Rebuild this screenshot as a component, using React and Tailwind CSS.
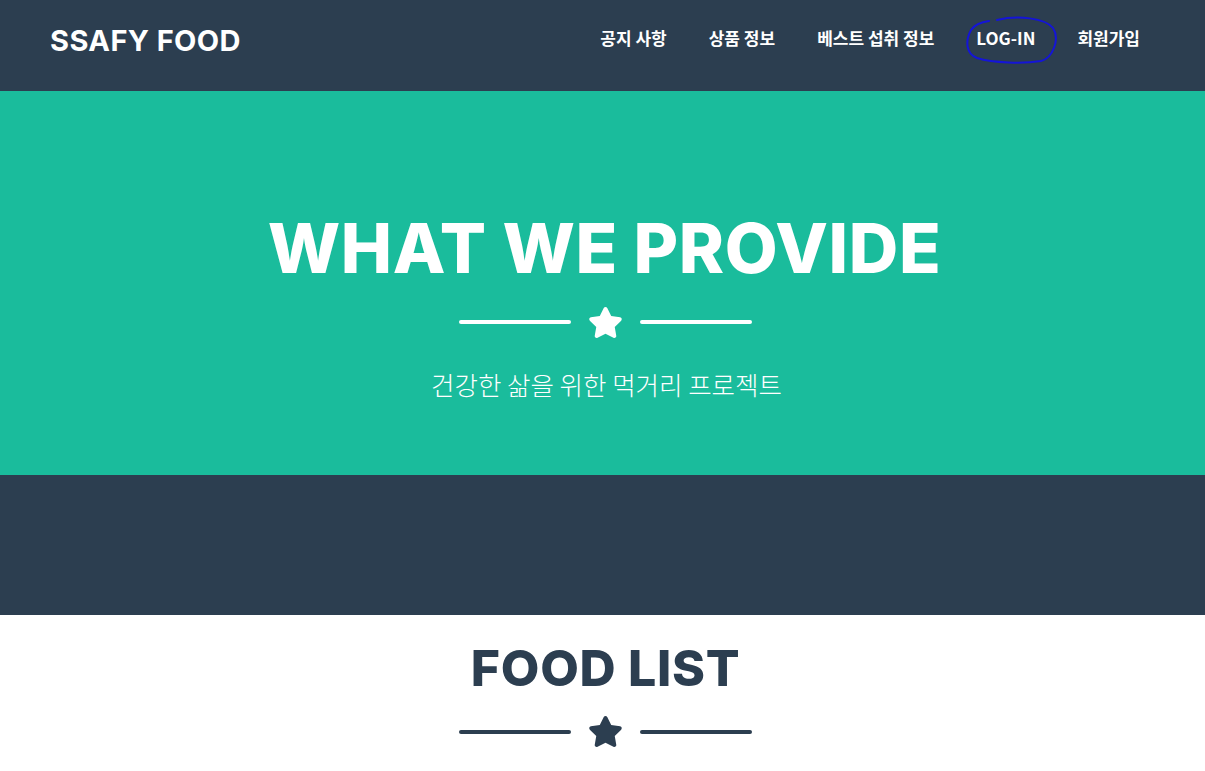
import React from "react";
import { FaStar } from "react-icons/fa";

function Divider({ light }) {
  const c = light ? "bg-white" : "bg-[#2c3e50]";
  return (
    <div className="flex items-center justify-center gap-[17px] ml-[6px]">
      <div className={`h-[4px] w-[112px] rounded-full ${c}`} />
      <FaStar className={light ? "text-white" : "text-[#2c3e50]"} size={35} />
      <div className={`h-[4px] w-[112px] rounded-full ${c}`} />
    </div>
  );
}

export default function App() {
  const items = ["공지 사항", "상품 정보", "베스트 섭취 정보", "LOG-IN", "회원가입"];
  return (
    <div className="min-h-[771px] bg-white font-['Inter','Noto_Sans_CJK_KR',sans-serif]">
      <nav className="relative h-[91px] bg-[#2c3e50] flex items-center justify-between pl-[50px] pr-[45px]">
        <div className="text-white font-bold text-[29px] tracking-[0.4px] pb-[10px]">SSAFY FOOD</div>
        <ul className="flex items-center pb-[15px]">
          {items.map((t) => (
            <li key={t} className="px-[21px] last:pr-5 text-white font-bold text-[17px] font-['Noto_Sans_CJK_KR',sans-serif]">
              {t}
            </li>
          ))}
        </ul>
        <svg className="absolute left-[963px] top-[15px] pointer-events-none" width="98" height="50" viewBox="0 0 98 50" fill="none">
          <path d="M34 5 C55 0 82 3 90 13 C97 24 90 43 78 46 C60 49 30 48 14 43 C3 39 2 26 8 15 C12 9 18 7 26 6" stroke="#1414d8" strokeWidth="2" strokeLinecap="round" />
        </svg>
      </nav>
      <header className="h-[384px] bg-[#1abc9c] flex flex-col items-center pt-[124px]">
        <h1 className="text-white font-extrabold text-[68.5px] leading-none tracking-[0.6px] ml-[4px]">WHAT WE PROVIDE</h1>
        <div className="mt-[21px]"><Divider light /></div>
        <p className="mt-[25px] text-white text-[25.5px] font-light font-['Noto_Sans_CJK_KR',sans-serif] ml-[8px]">건강한 삶을 위한 먹거리 프로젝트</p>
      </header>
      <section className="h-[140px] bg-[#2c3e50]" />
      <section className="flex flex-col items-center pt-[28px]">
        <h2 className="text-[#2c3e50] font-extrabold text-[50px] leading-none tracking-[0.7px] ml-[6px]">FOOD LIST</h2>
        <div className="mt-[21px]"><Divider /></div>
      </section>
    </div>
  );
}
